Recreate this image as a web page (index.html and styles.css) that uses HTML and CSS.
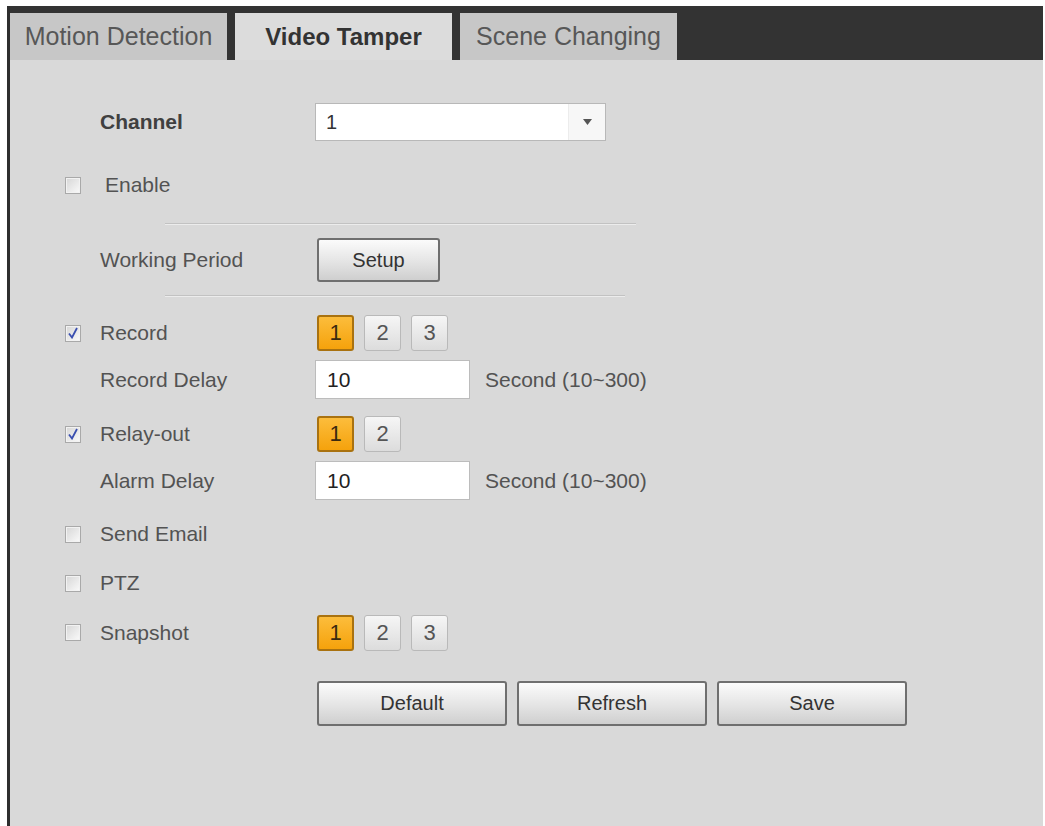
FILE: index.html
```html
<!DOCTYPE html>
<html>
<head>
<meta charset="utf-8">
<link rel="stylesheet" href="styles.css">
</head>
<body>
<div class="panel">
  <div class="tabbar">
    <div class="tab">Motion Detection</div>
    <div class="tab active">Video Tamper</div>
    <div class="tab">Scene Changing</div>
  </div>
  <div class="form">
    <div class="row r-channel">
      <div class="lab plain"><span class="bold">Channel</span></div>
      <div class="select"><span class="sel-val">1</span><span class="sel-arrow"><svg width="9" height="6" viewBox="0 0 9 6"><path d="M0 0H9L4.5 6Z" fill="#555"/></svg></span></div>
    </div>
    <div class="row r-enable">
      <div class="lab"><span class="cb"></span><span class="txt wide">Enable</span></div>
    </div>
    <div class="sep sep1"></div>
    <div class="row r-wp">
      <div class="lab plain"><span class="txt">Working Period</span></div>
      <div class="btn btn-setup">Setup</div>
    </div>
    <div class="sep sep2"></div>
    <div class="row r-rec">
      <div class="lab"><span class="cb checked"><svg width="12" height="12" viewBox="0 0 12 12"><path d="M2 6.5L5 10.5L10 1" fill="none" stroke="#3a4fb0" stroke-width="1.8"/></svg></span><span class="txt">Record</span></div>
      <div class="nums"><span class="num on">1</span><span class="num">2</span><span class="num">3</span></div>
    </div>
    <div class="row r-rd">
      <div class="lab plain"><span class="txt">Record Delay</span></div>
      <div class="input">10</div>
      <span class="unit">Second (10~300)</span>
    </div>
    <div class="row r-relay">
      <div class="lab"><span class="cb checked"><svg width="12" height="12" viewBox="0 0 12 12"><path d="M2 6.5L5 10.5L10 1" fill="none" stroke="#3a4fb0" stroke-width="1.8"/></svg></span><span class="txt">Relay-out</span></div>
      <div class="nums"><span class="num on">1</span><span class="num">2</span></div>
    </div>
    <div class="row r-ad">
      <div class="lab plain"><span class="txt">Alarm Delay</span></div>
      <div class="input">10</div>
      <span class="unit">Second (10~300)</span>
    </div>
    <div class="row r-se">
      <div class="lab"><span class="cb"></span><span class="txt">Send Email</span></div>
    </div>
    <div class="row r-ptz">
      <div class="lab"><span class="cb"></span><span class="txt">PTZ</span></div>
    </div>
    <div class="row r-snap">
      <div class="lab"><span class="cb"></span><span class="txt">Snapshot</span></div>
      <div class="nums"><span class="num on">1</span><span class="num">2</span><span class="num">3</span></div>
    </div>
    <div class="row r-btns">
      <div class="lab plain"></div>
      <div class="actions">
        <div class="btn btn-big">Default</div>
        <div class="btn btn-big">Refresh</div>
        <div class="btn btn-big">Save</div>
      </div>
    </div>
  </div>
</div>
</body>
</html>
```
FILE: styles.css
```css
html, body {
  margin: 0;
  padding: 0;
  background: #ffffff;
  height: 100%;
  overflow: hidden;
}
body {
  font-family: "Liberation Sans", Arial, sans-serif;
  color: #555;
}
.panel {
  margin: 6px 2px 0 7px;
  height: 820px;
  background: #d9d9d9;
  border-left: 3px solid #2e2e2e;
  box-sizing: border-box;
}
.tabbar {
  height: 54px;
  background: #333333;
  box-sizing: border-box;
  padding-top: 7px;
  display: flex;
  gap: 8px;
}
.tab {
  width: 217px;
  height: 47px;
  background: #c7c7c7;
  color: #575757;
  font-size: 25px;
  display: flex;
  align-items: center;
  justify-content: center;
}
.tab.active {
  background: #dcdcdc;
  color: #333;
  font-weight: bold;
  font-size: 24px;
}
.form {
  display: flex;
  flex-direction: column;
  padding-left: 55px;
}
.row {
  display: flex;
  align-items: center;
}
.r-channel { margin-top: 43px; height: 38px; }
.r-enable { margin-top: 29px; height: 30px; }
.sep {
  height: 1px;
  border-top: 1px solid #c2c2c2;
  background: #ececec;
}
.sep1 { margin-top: 23px; margin-left: 100px; width: 471px; }
.r-wp { margin-top: 13px; height: 44px; }
.sep2 { margin-top: 13px; margin-left: 100px; width: 460px; }
.r-rec { margin-top: 18px; height: 36px; }
.r-rd { margin-top: 9px; height: 39px; }
.r-relay { margin-top: 17px; height: 36px; }
.r-ad { margin-top: 10px; height: 37px; }
.r-se { margin-top: 20px; height: 30px; }
.r-ptz { margin-top: 19px; height: 30px; }
.r-snap { margin-top: 16px; height: 37px; }
.r-btns { margin-top: 30px; height: 45px; }

.lab {
  width: 250px;
  display: flex;
  align-items: center;
  font-size: 21px;
  color: #535353;
}
.lab.plain { padding-left: 35px; box-sizing: border-box; }
.bold { font-weight: bold; color: #404040; }
.txt { margin-left: 19px; }
.plain .txt { margin-left: 0; }
.txt.wide { margin-left: 24px; }
.cb {
  width: 14px;
  height: 15px;
  border: 1px solid #a9a9a9;
  background: linear-gradient(135deg, #d6d6d6, #fafafa);
  box-shadow: inset 0 0 0 1px #f2f2f2;
  display: flex;
  align-items: center;
  justify-content: center;
}
.select {
  width: 291px;
  height: 38px;
  box-sizing: border-box;
  background: #fff;
  border: 1px solid #b8b8b8;
  display: flex;
  align-items: center;
  font-size: 20px;
  color: #333;
}
.sel-val { flex: 1; padding-left: 10px; }
.sel-arrow {
  width: 36px;
  height: 100%;
  border-left: 1px solid #ececec;
  background: #f7f7f7;
  display: flex;
  align-items: center;
  justify-content: center;
}
.btn {
  box-sizing: border-box;
  border: 2px solid #6f6f6f;
  border-radius: 3px;
  background: linear-gradient(#fbfbfb, #e4e4e4 55%, #cfcfcf);
  display: flex;
  align-items: center;
  justify-content: center;
  font-size: 20px;
  color: #333;
}
.btn-setup { width: 123px; height: 44px; margin-left: 2px; }
.nums { display: flex; gap: 10px; margin-left: 2px; }
.num {
  width: 37px;
  height: 36px;
  box-sizing: border-box;
  border: 1px solid #b9b9b9;
  border-radius: 3px;
  background: linear-gradient(#f6f6f6, #dcdcdc);
  display: flex;
  align-items: center;
  justify-content: center;
  font-size: 22px;
  color: #555;
}
.num.on {
  border: 2px solid #a97210;
  background: linear-gradient(#fcbd3c, #f5a20c);
  color: #3a2a10;
}
.input {
  width: 155px;
  height: 39px;
  box-sizing: border-box;
  background: #fff;
  border: 1px solid #bcbcbc;
  padding-left: 11px;
  display: flex;
  align-items: center;
  font-size: 21px;
  color: #222;
}
.unit {
  margin-left: 15px;
  font-size: 21px;
  color: #535353;
}
.actions { display: flex; gap: 10px; margin-left: 2px; }
.btn-big { width: 190px; height: 45px; }
```
